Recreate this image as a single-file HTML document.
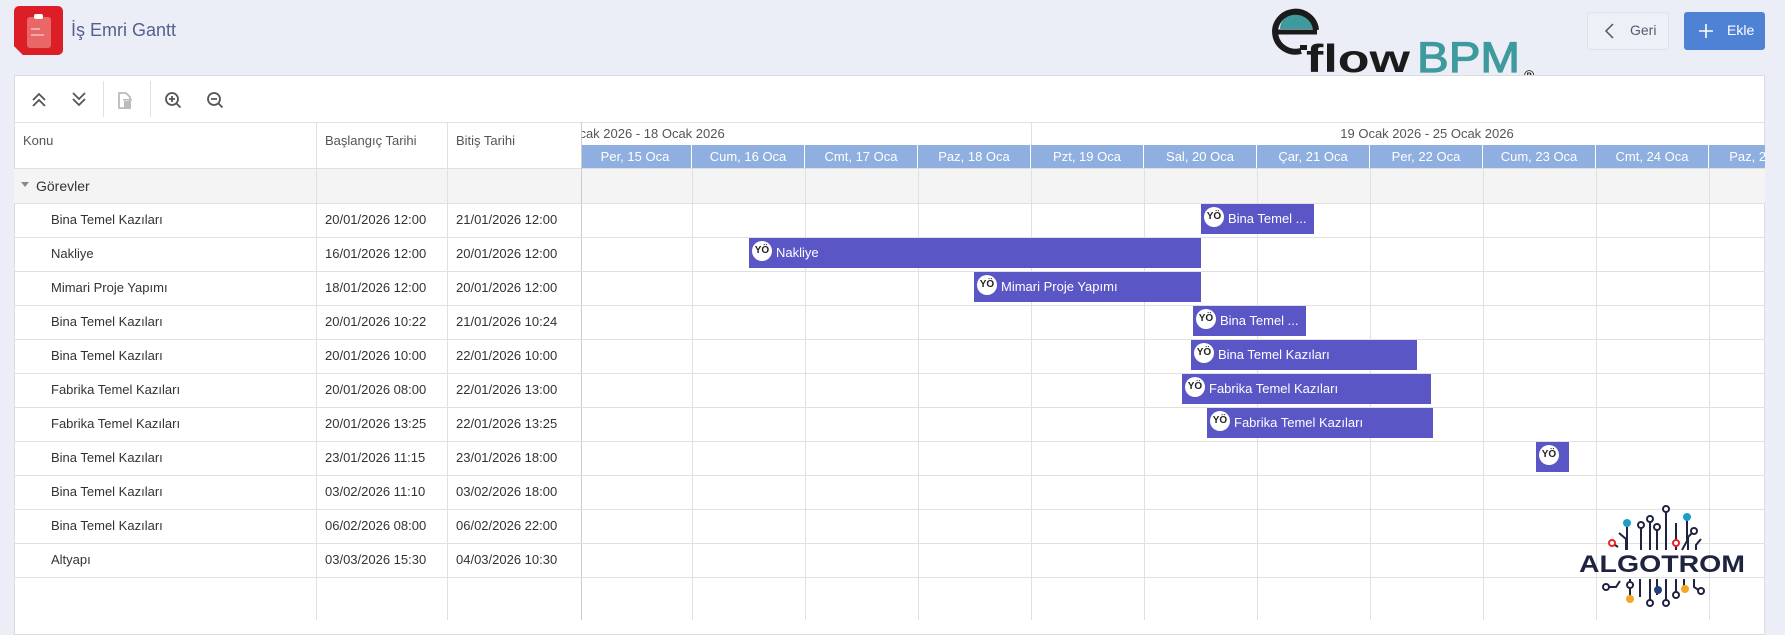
<!DOCTYPE html><html><head><meta charset="utf-8"><style>
*{margin:0;padding:0;box-sizing:border-box}
body{width:1785px;height:620px;overflow:hidden;background:#eceef7;font-family:"Liberation Sans","DejaVu Sans",sans-serif;position:relative;color:#333}
.a{position:absolute}
.panel{left:14px;top:75px;width:1751px;height:560px;background:#fff;border:1px solid #dcdcdc}
.hl{position:absolute;height:1px;background:#e0e0e0}
.vl{position:absolute;width:1px;background:#e0e0e0}
.t{position:absolute;font-size:13px;white-space:nowrap}
.day{position:absolute;top:0;height:23px;width:113px;background:#8fafe0;color:#fff;font-size:13px;text-align:center;line-height:23px;border-right:1px solid #fff}
.bar{position:absolute;height:30px;background:#5a56c6;color:#fff;font-size:13px;line-height:30px;white-space:nowrap;overflow:hidden}
.bar i{display:inline-block;width:20px;height:20px;border-radius:50%;background:#fff;color:#222;font-style:normal;font-size:10px;font-weight:bold;text-align:center;line-height:20px;margin:0 4px 0 3px;vertical-align:middle;position:relative;top:-3px}
</style></head><body>
<!-- header -->
<div class="a" style="left:14px;top:6px;width:49px;height:49px;background:#dc1f26;border-radius:5px;clip-path:polygon(0 0,100% 0,100% 100%,18% 100%,0 82%)"></div>
<div class="a" style="left:27px;top:17px;width:24px;height:31px;background:#ea6767;border-radius:3px"></div>
<div class="a" style="left:34px;top:14px;width:9px;height:5px;background:#fff;border-radius:2px"></div>
<div class="a" style="left:31px;top:28px;width:9px;height:2px;background:#f5aaaa"></div>
<div class="a" style="left:31px;top:34px;width:13px;height:2px;background:#f5aaaa"></div>
<div class="t" style="left:71px;top:20px;font-size:18px;color:#55608f">İş Emri Gantt</div>
<!-- eflow logo -->
<svg class="a" style="left:1270px;top:5px" width="280" height="75">
<path d="M10 24 A17 16 0 0 1 44 24 Z" fill="#3e9a9c"/>
<path d="M46 25 A20.5 20 0 1 0 31 46" fill="none" stroke="#1b1b1b" stroke-width="6"/>
<path d="M7 27 H47" stroke="#1b1b1b" stroke-width="5"/>
<rect x="30" y="40" width="7" height="5" fill="#1b1b1b"/>
<text x="36" y="67" font-family="Liberation Sans" font-size="39" font-weight="bold" fill="#1b1b1b" textLength="104" lengthAdjust="spacingAndGlyphs">flow</text>
<text x="147" y="67" font-family="Liberation Sans" font-size="43" fill="#3e9a9c" stroke="#3e9a9c" stroke-width="1.2" textLength="103" lengthAdjust="spacingAndGlyphs">BPM</text>
<text x="254" y="75" font-family="Liberation Sans" font-size="14" font-weight="bold" fill="#1b1b1b">®</text>
</svg>
<div class="a" style="left:1587px;top:12px;width:82px;height:38px;border:1px solid #dfe1ea;border-radius:3px;background:#eef0f7"></div>
<svg class="a" style="left:1603px;top:22px" width="14" height="18"><path d="M10 2 L3 9 L10 16" fill="none" stroke="#555" stroke-width="1.5"/></svg>
<div class="t" style="left:1630px;top:22px;font-size:14px;color:#555a6e">Geri</div>
<div class="a" style="left:1684px;top:12px;width:81px;height:38px;background:#4d82d5;border-radius:3px"></div>
<svg class="a" style="left:1698px;top:23px" width="16" height="16"><path d="M8 1V15M1 8H15" stroke="#fff" stroke-width="1.6"/></svg>
<div class="t" style="left:1727px;top:22px;font-size:14px;color:#fff">Ekle</div>
<!-- panel -->
<div class="a panel"></div>
<svg class="a" style="left:30px;top:89px" width="200" height="24" fill="none" stroke="#555" stroke-width="1.8">
<path d="M3 11L9 5L15 11M3 17L9 11L15 17"/>
<path d="M43 4L49 10L55 4M43 10L49 16L55 10"/>
<path d="M89 4H96L100 8V19H89Z" stroke="#bbb"/><rect x="94" y="12" width="7" height="8" fill="#bbb" stroke="none"/><rect x="93" y="10" width="9" height="1.5" fill="#bbb" stroke="none"/>
<circle cx="142" cy="10" r="6"/><path d="M146.5 14.5L150.5 18.5M139 10H145M142 7V13"/>
<circle cx="184" cy="10" r="6"/><path d="M188.5 14.5L192.5 18.5M181 10H187"/>
</svg>
<div class="vl" style="left:103px;top:81px;height:36px"></div>
<div class="vl" style="left:150px;top:81px;height:36px"></div>
<div class="hl" style="left:14px;top:122px;width:1751px"></div>
<!-- grid header -->
<div class="t" style="left:23px;top:133px;color:#555">Konu</div>
<div class="t" style="left:325px;top:133px;color:#555">Başlangıç Tarihi</div>
<div class="t" style="left:456px;top:133px;color:#555">Bitiş Tarihi</div>
<div class="a" style="left:14px;top:168px;width:1751px;height:35px;background:#f4f4f4"></div>
<div class="hl" style="left:14px;top:168px;width:1751px"></div>
<!-- timeline header -->
<div class="a" style="left:581px;top:122px;width:1184px;height:46px;overflow:hidden">
<div class="t" style="left:-223px;top:4px;width:560px;text-align:center;color:#555">12 Ocak 2026 - 18 Ocak 2026</div>
<div class="t" style="left:450px;top:4px;width:792px;text-align:center;color:#555">19 Ocak 2026 - 25 Ocak 2026</div>
<div class="vl" style="left:450px;top:0;height:23px"></div>
</div>
<div class="a" style="left:581px;top:145px;width:1184px;height:23px;overflow:hidden">
<div class="day" style="left:-2px">Per, 15 Oca</div><div class="day" style="left:111px">Cum, 16 Oca</div><div class="day" style="left:224px">Cmt, 17 Oca</div><div class="day" style="left:337px">Paz, 18 Oca</div><div class="day" style="left:450px">Pzt, 19 Oca</div><div class="day" style="left:563px">Sal, 20 Oca</div><div class="day" style="left:676px">Çar, 21 Oca</div><div class="day" style="left:789px">Per, 22 Oca</div><div class="day" style="left:902px">Cum, 23 Oca</div><div class="day" style="left:1015px">Cmt, 24 Oca</div><div class="day" style="left:1128px">Paz, 25 Oca</div>
</div>
<!-- vertical lines -->
<div class="vl" style="left:316px;top:122px;height:498px"></div>
<div class="vl" style="left:447px;top:122px;height:498px"></div>
<div class="vl" style="left:581px;top:122px;height:498px;background:#ccc"></div>
<div class="vl" style="left:692px;top:168px;height:452px"></div><div class="vl" style="left:805px;top:168px;height:452px"></div><div class="vl" style="left:918px;top:168px;height:452px"></div><div class="vl" style="left:1031px;top:168px;height:452px"></div><div class="vl" style="left:1144px;top:168px;height:452px"></div><div class="vl" style="left:1257px;top:168px;height:452px"></div><div class="vl" style="left:1370px;top:168px;height:452px"></div><div class="vl" style="left:1483px;top:168px;height:452px"></div><div class="vl" style="left:1596px;top:168px;height:452px"></div><div class="vl" style="left:1709px;top:168px;height:452px"></div>
<!-- rows -->
<div class="hl" style="left:14px;top:203px;width:1751px"></div><div class="hl" style="left:14px;top:237px;width:1751px"></div><div class="hl" style="left:14px;top:271px;width:1751px"></div><div class="hl" style="left:14px;top:305px;width:1751px"></div><div class="hl" style="left:14px;top:339px;width:1751px"></div><div class="hl" style="left:14px;top:373px;width:1751px"></div><div class="hl" style="left:14px;top:407px;width:1751px"></div><div class="hl" style="left:14px;top:441px;width:1751px"></div><div class="hl" style="left:14px;top:475px;width:1751px"></div><div class="hl" style="left:14px;top:509px;width:1751px"></div><div class="hl" style="left:14px;top:543px;width:1751px"></div><div class="hl" style="left:14px;top:577px;width:1751px"></div>
<svg class="a" style="left:21px;top:182px" width="8" height="6"><path d="M0 0H8L4 5Z" fill="#888"/></svg>
<div class="t" style="left:36px;top:178px;font-size:14px">Görevler</div>
<div class="t" style="left:51px;top:212px">Bina Temel Kazıları</div><div class="t" style="left:325px;top:212px">20/01/2026 12:00</div><div class="t" style="left:456px;top:212px">21/01/2026 12:00</div>
<div class="t" style="left:51px;top:246px">Nakliye</div><div class="t" style="left:325px;top:246px">16/01/2026 12:00</div><div class="t" style="left:456px;top:246px">20/01/2026 12:00</div>
<div class="t" style="left:51px;top:280px">Mimari Proje Yapımı</div><div class="t" style="left:325px;top:280px">18/01/2026 12:00</div><div class="t" style="left:456px;top:280px">20/01/2026 12:00</div>
<div class="t" style="left:51px;top:314px">Bina Temel Kazıları</div><div class="t" style="left:325px;top:314px">20/01/2026 10:22</div><div class="t" style="left:456px;top:314px">21/01/2026 10:24</div>
<div class="t" style="left:51px;top:348px">Bina Temel Kazıları</div><div class="t" style="left:325px;top:348px">20/01/2026 10:00</div><div class="t" style="left:456px;top:348px">22/01/2026 10:00</div>
<div class="t" style="left:51px;top:382px">Fabrika Temel Kazıları</div><div class="t" style="left:325px;top:382px">20/01/2026 08:00</div><div class="t" style="left:456px;top:382px">22/01/2026 13:00</div>
<div class="t" style="left:51px;top:416px">Fabrika Temel Kazıları</div><div class="t" style="left:325px;top:416px">20/01/2026 13:25</div><div class="t" style="left:456px;top:416px">22/01/2026 13:25</div>
<div class="t" style="left:51px;top:450px">Bina Temel Kazıları</div><div class="t" style="left:325px;top:450px">23/01/2026 11:15</div><div class="t" style="left:456px;top:450px">23/01/2026 18:00</div>
<div class="t" style="left:51px;top:484px">Bina Temel Kazıları</div><div class="t" style="left:325px;top:484px">03/02/2026 11:10</div><div class="t" style="left:456px;top:484px">03/02/2026 18:00</div>
<div class="t" style="left:51px;top:518px">Bina Temel Kazıları</div><div class="t" style="left:325px;top:518px">06/02/2026 08:00</div><div class="t" style="left:456px;top:518px">06/02/2026 22:00</div>
<div class="t" style="left:51px;top:552px">Altyapı</div><div class="t" style="left:325px;top:552px">03/03/2026 15:30</div><div class="t" style="left:456px;top:552px">04/03/2026 10:30</div>
<!-- bars -->
<div class="bar" style="left:1201px;top:204px;width:113px"><i>YÖ</i>Bina Temel ...</div>
<div class="bar" style="left:749px;top:238px;width:452px"><i>YÖ</i>Nakliye</div>
<div class="bar" style="left:974px;top:272px;width:227px"><i>YÖ</i>Mimari Proje Yapımı</div>
<div class="bar" style="left:1193px;top:306px;width:113px"><i>YÖ</i>Bina Temel ...</div>
<div class="bar" style="left:1191px;top:340px;width:226px"><i>YÖ</i>Bina Temel Kazıları</div>
<div class="bar" style="left:1182px;top:374px;width:249px"><i>YÖ</i>Fabrika Temel Kazıları</div>
<div class="bar" style="left:1207px;top:408px;width:226px"><i>YÖ</i>Fabrika Temel Kazıları</div>
<div class="bar" style="left:1536px;top:442px;width:33px"><i>YÖ</i></div>
<!-- algotrom -->
<svg class="a" style="left:1578px;top:505px" width="175" height="110" fill="none" stroke="#1e2340" stroke-width="2">
<path d="M88 4V45M72 14V45M98 18V45M63 20V45M79 22V45M49 18V45M109 12V36L104 45M41 28L48 34V45M116 26L110 32V45M123 34L118 40V45M34 38L40 42"/>
<circle cx="88" cy="4" r="3" fill="#fff"/><circle cx="72" cy="14" r="3" fill="#fff"/><circle cx="79" cy="22" r="3" fill="#fff"/><circle cx="63" cy="20" r="3" fill="#fff"/><circle cx="116" cy="26" r="3" fill="#fff"/>
<circle cx="49" cy="18" r="4" fill="#1aa0c8" stroke="none"/><circle cx="109" cy="12" r="4" fill="#1aa0c8" stroke="none"/>
<circle cx="34" cy="38" r="3" fill="#fff" stroke="#e22"/><circle cx="98" cy="38" r="3" fill="#fff" stroke="#e22"/>
<text x="84" y="67" text-anchor="middle" font-family="Liberation Sans" font-size="24" font-weight="bold" fill="#1e2340" stroke="none" textLength="166" lengthAdjust="spacingAndGlyphs">ALGOTROM</text>
<path d="M52 74V94M62 74V92M72 74V98M79 74V90M88 74V98M98 74V90M106 74V84M42 76L38 82H28M116 74V82L122 86M50 80H56"/>
<circle cx="72" cy="98" r="3" fill="#fff"/><circle cx="88" cy="98" r="3" fill="#fff"/><circle cx="98" cy="90" r="3" fill="#fff"/><circle cx="28" cy="82" r="3" fill="#fff"/><circle cx="123" cy="86" r="3" fill="#fff"/><circle cx="52" cy="80" r="3" fill="#fff"/>
<circle cx="80" cy="85" r="4" fill="#23407a" stroke="none"/><circle cx="52" cy="94" r="4" fill="#f5a623" stroke="none"/><circle cx="107" cy="84" r="4" fill="#f5a623" stroke="none"/>
</svg>
</body></html>
